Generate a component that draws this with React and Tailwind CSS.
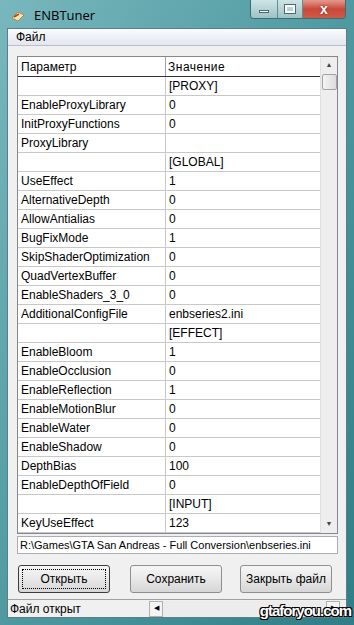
const rows = [
  ["", "[PROXY]"],
  ["EnableProxyLibrary", "0"],
  ["InitProxyFunctions", "0"],
  ["ProxyLibrary", ""],
  ["", "[GLOBAL]"],
  ["UseEffect", "1"],
  ["AlternativeDepth", "0"],
  ["AllowAntialias", "0"],
  ["BugFixMode", "1"],
  ["SkipShaderOptimization", "0"],
  ["QuadVertexBuffer", "0"],
  ["EnableShaders_3_0", "0"],
  ["AdditionalConfigFile", "enbseries2.ini"],
  ["", "[EFFECT]"],
  ["EnableBloom", "1"],
  ["EnableOcclusion", "0"],
  ["EnableReflection", "1"],
  ["EnableMotionBlur", "0"],
  ["EnableWater", "0"],
  ["EnableShadow", "0"],
  ["DepthBias", "100"],
  ["EnableDepthOfField", "0"],
  ["", "[INPUT]"],
  ["KeyUseEffect", "123"],
];

function Btn({ children, focused }) {
  return (
    <div
      className={`w-[92px] h-[28px] rounded-[3px] bg-gradient-to-b from-[#f6f6f6] via-[#e8e8e8] to-[#d6d6d6] flex items-center justify-center text-[12px] text-black whitespace-nowrap ${
        focused ? "border border-[#3c3c3c]" : "border border-[#8e8f8f]"
      }`}
    >
      {focused ? (
        <div className="w-[84px] h-[20px] border border-dotted border-black flex items-center justify-center">{children}</div>
      ) : (
        children
      )}
    </div>
  );
}

export default function App() {
  return (
    <div
      className="w-[354px] h-[625px] flex flex-col bg-gradient-to-br from-[#78b7bd] via-[#4f9aa1] to-[#2f7d86] overflow-hidden"
      style={{ fontFamily: '"Liberation Sans", Arial, sans-serif' }}
    >
      {/* title bar */}
      <div className="h-[29px] flex items-start relative">
        <div className="flex items-center gap-[8px] pl-[10px] pt-[6px]">
          <svg width="16" height="14" viewBox="0 0 16 14">
            <path d="M2 9 L8 3 L14 6 L8 12 Z" fill="#f3e7b6" stroke="#b48a3c" strokeWidth="1" />
            <path d="M4 8 L9 5" stroke="#c0392b" strokeWidth="1.5" />
          </svg>
          <span className="text-[13px] text-black" style={{ fontFamily: '"Open Sans", "Liberation Sans", sans-serif' }}>ENBTuner</span>
        </div>
        <div className="ml-auto mr-[8px] flex h-[19px] rounded-b-[4px] overflow-hidden border border-t-0 border-[#3f6c72]">
          <div className="w-[27px] bg-gradient-to-b from-[#cfe4e6] to-[#9cc3c7] flex items-end justify-center pb-[5px] border-r border-[#5f8e93]">
            <div className="w-[10px] h-[3px] bg-white border border-[#4a6a6e]" />
          </div>
          <div className="w-[25px] bg-gradient-to-b from-[#cfe4e6] to-[#9cc3c7] flex items-center justify-center border-r border-[#5f8e93]">
            <div className="w-[10px] h-[8px] border-2 border-white outline outline-1 outline-[#4a6a6e]" />
          </div>
          <div className="w-[42px] bg-gradient-to-b from-[#e39a8f] via-[#c9483a] to-[#d05a48] flex items-center justify-center">
            <span className="text-white font-bold text-[14px] leading-none" style={{ textShadow: "0 0 2px #5a1a12" }}>x</span>
          </div>
        </div>
      </div>

      {/* client */}
      <div className="mx-[7px] flex-1 flex flex-col bg-[#f0f0f0] border border-[#5b7f84]">
        <div className="h-[17px] bg-gradient-to-b from-[#fbfbfd] to-[#e3e6ef] border-b border-[#b9c0c9] flex items-center pl-[8px] text-[12px] text-black">
          Файл
        </div>
        <div className="flex-1 flex flex-col pl-[9px] pr-[8px] pt-[10px]">
          {/* grid */}
          <div className="h-[478px] border border-[#828790] bg-white flex">
            <div className="flex-1 flex flex-col text-[12px] text-black">
              <div className="h-[20px] flex border-b border-[#333] shrink-0">
                <div className="w-[148px] border-r border-[#a0a0a0] pl-[3px] flex items-center">Параметр</div>
                <div className="flex-1 pl-[2px] flex items-center tracking-[0.5px]">Значение</div>
              </div>
              {rows.map(([k, v], i) => (
                <div key={i} className="h-[19px] flex border-b border-[#c8c8c8] shrink-0">
                  <div className="w-[148px] border-r border-[#c8c8c8] pl-[3px] flex items-center whitespace-nowrap">{k}</div>
                  <div className="flex-1 pl-[3px] flex items-center whitespace-nowrap">{v}</div>
                </div>
              ))}
            </div>
            <div className="w-[17px] bg-[#eeeeee] border-l border-[#e0e0e0] flex flex-col items-center">
              <div className="h-[17px] flex items-center justify-center text-[7px] text-[#444]">▲</div>
              <div className="w-[15px] h-[16px] bg-gradient-to-r from-[#f4f4f4] to-[#dcdcdc] border border-[#a2a2a2] rounded-[2px]" />
              <div className="flex-1" />
              <div className="h-[17px] flex items-center justify-center text-[7px] text-[#444]">▼</div>
            </div>
          </div>

          {/* path */}
          <div className="mt-[2px] h-[18px] border border-[#abadb3] bg-white flex items-center pl-[2px] text-[11px] text-black whitespace-nowrap overflow-hidden">
            R:\Games\GTA San Andreas - Full Conversion\enbseries.ini
          </div>

          {/* buttons */}
          <div className="mt-[11px] flex pl-[1px]">
            <Btn focused>Открыть</Btn>
            <div className="ml-[20px]"><Btn>Сохранить</Btn></div>
            <div className="ml-[18px]"><Btn>Закрыть файл</Btn></div>
          </div>
        </div>

        {/* status bar */}
        <div className="h-[18px] mt-[6px] border-t border-[#a0a0a0] flex items-center text-[12px] text-black relative">
          <div className="w-[141px] pl-[2px]">Файл открыт</div>
          <div className="flex-1 h-[16px] flex bg-[#ececec] mr-[6px]">
            <div className="w-[14px] border border-[#b0b0b0] bg-[#f4f4f4] flex items-center justify-center text-[7px]">◀</div>
            <div className="flex-1" />
            <div className="w-[14px] border border-[#b0b0b0] bg-[#f4f4f4] flex items-center justify-center text-[7px]">▶</div>
          </div>
          <div
            className="absolute right-[-5px] top-[0px] text-[15px] font-bold text-white tracking-[-1px]"
            style={{ textShadow: "1px 1px 0 #000, -1px -1px 0 #000, 1px -1px 0 #000, -1px 1px 0 #000" }}
          >
            gtaforyou.com
          </div>
        </div>
      </div>
      <div className="h-[7px]" />
    </div>
  );
}
